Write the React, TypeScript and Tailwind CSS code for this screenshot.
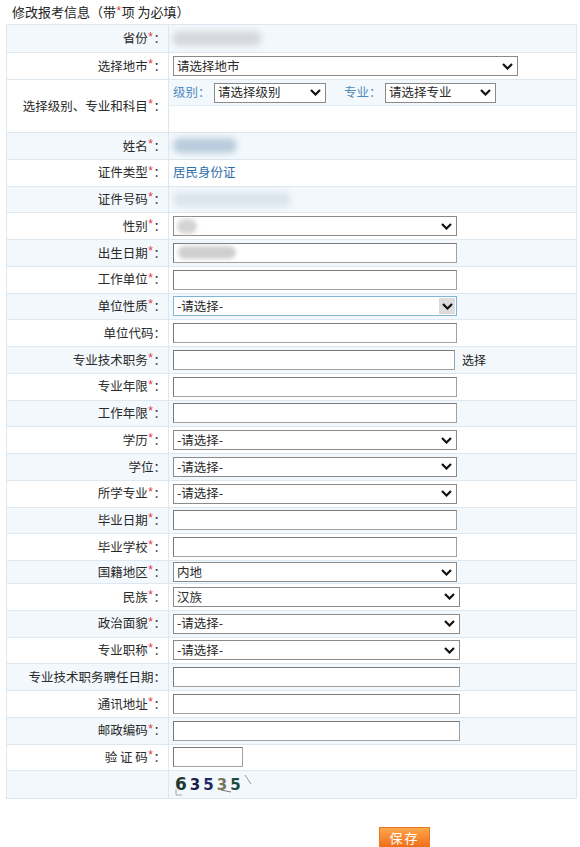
import { ReactNode } from "react";

type Field =
  | { kind: "blur"; w: number; tint?: string }
  | { kind: "text"; text: string }
  | { kind: "input"; w: number; blob?: boolean; after?: string }
  | { kind: "select"; w: number; text?: string; blob?: boolean; focus?: boolean };

interface Row {
  label: string;
  req: boolean;
  field: Field;
  h?: string;
}

const rows: Row[] = [
  { label: "姓名", req: true, field: { kind: "blur", w: 64, tint: "bg-[#b9cbdc]" } },
  { label: "证件类型", req: true, field: { kind: "text", text: "居民身份证" } },
  { label: "证件号码", req: true, field: { kind: "blur", w: 118, tint: "bg-[#dde5ec]" } },
  { label: "性别", req: true, field: { kind: "select", w: 284, blob: true } },
  { label: "出生日期", req: true, field: { kind: "input", w: 284, blob: true } },
  { label: "工作单位", req: true, field: { kind: "input", w: 284 } },
  { label: "单位性质", req: true, field: { kind: "select", w: 284, text: "-请选择-", focus: true } },
  { label: "单位代码", req: false, field: { kind: "input", w: 284 } },
  { label: "专业技术职务", req: true, field: { kind: "input", w: 282, after: "选择" } },
  { label: "专业年限", req: true, field: { kind: "input", w: 284 } },
  { label: "工作年限", req: true, field: { kind: "input", w: 284 } },
  { label: "学历", req: true, field: { kind: "select", w: 284, text: "-请选择-" } },
  { label: "学位", req: false, field: { kind: "select", w: 284, text: "-请选择-" } },
  { label: "所学专业", req: true, field: { kind: "select", w: 284, text: "-请选择-" } },
  { label: "毕业日期", req: true, field: { kind: "input", w: 284 } },
  { label: "毕业学校", req: true, field: { kind: "input", w: 284 } },
  { label: "国籍地区", req: true, field: { kind: "select", w: 284, text: "内地" }, h: "h-[23px]" },
  { label: "民族", req: true, field: { kind: "select", w: 287, text: "汉族" } },
  { label: "政治面貌", req: true, field: { kind: "select", w: 287, text: "-请选择-" } },
  { label: "专业职称", req: true, field: { kind: "select", w: 287, text: "-请选择-" } },
  { label: "专业技术职务聘任日期", req: false, field: { kind: "input", w: 287 } },
  { label: "通讯地址", req: true, field: { kind: "input", w: 287 } },
  { label: "邮政编码", req: true, field: { kind: "input", w: 287 } },
  { label: "验 证 码", req: true, field: { kind: "input", w: 70 } },
];

function Chevron() {
  return (
    <svg width="11" height="7" viewBox="0 0 11 7" className="shrink-0">
      <path d="M1 1l4.5 4.5L10 1" fill="none" stroke="#111" strokeWidth="2.2" />
    </svg>
  );
}

function Star() {
  return (
    <span className="text-[#e3343e] text-[12px] font-['Liberation_Sans',sans-serif] relative -top-[2px] mx-[0.5px]">
      *
    </span>
  );
}

function Label({ text, req }: { text: string; req: boolean }) {
  return (
    <div className="w-[162px] shrink-0 border-r border-[#dce7f0] flex items-center justify-end pr-[2px] whitespace-nowrap">
      {text}
      {req && <Star />}：
    </div>
  );
}

function Select({ w, text, blob, focus }: { w: number; text?: string; blob?: boolean; focus?: boolean }) {
  return (
    <div
      style={{ width: w }}
      className={`h-[20px] bg-white flex items-center pl-[3px] pr-[4px] border ${
        focus ? "border-[#7fb6d2]" : "border-[#8a8a8a]"
      }`}
    >
      {blob && <div className="w-[20px] h-[15px] rounded-full bg-[#d4d4d4] blur-[2px]" />}
      <span className="flex-1 leading-none">{text}</span>
      {focus ? (
        <div className="w-[16px] h-[16px] -mr-[3px] bg-[#dcdcdc] flex items-center justify-center">
          <Chevron />
        </div>
      ) : (
        <Chevron />
      )}
    </div>
  );
}

function Input({ w, blob }: { w: number; blob?: boolean }) {
  return (
    <div
      style={{ width: w }}
      className="h-[20px] bg-white border border-[#a0a0a0] border-t-[#7a7a7a] border-l-[#7a7a7a] flex items-center pl-[4px]"
    >
      {blob && <div className="w-[58px] h-[13px] rounded-full bg-[#cfcfcf] blur-[2px]" />}
    </div>
  );
}

function Value({ f }: { f: Field }): ReactNode {
  switch (f.kind) {
    case "blur":
      return <div style={{ width: f.w }} className={`h-[15px] rounded-full blur-[3px] ${f.tint}`} />;
    case "text":
      return <span className="text-[#2f6ea7]">{f.text}</span>;
    case "input":
      return (
        <div className="flex items-center gap-[7px]">
          <Input w={f.w} blob={f.blob} />
          {f.after && <span className="text-[12px] text-[#222]">{f.after}</span>}
        </div>
      );
    case "select":
      return <Select w={f.w} text={f.text} blob={f.blob} focus={f.focus} />;
  }
}

export default function App() {
  return (
    <div className="bg-white min-h-[847px] text-[12.5px] text-[#2a2a2a] font-['Noto_Sans_CJK_SC','Noto_Sans',sans-serif]">
      <div className="h-[24px] pl-[12px] pt-[2px] text-[13px] text-[#222]">
        修改报考信息（带<Star />项 为必填）
      </div>

      <div className="ml-[6px] w-[571px] border border-[#dce7f0]">
        {/* 省份 */}
        <div className="flex h-[28px] bg-[#f3f8fc] border-b border-[#dce7f0]">
          <Label text="省份" req />
          <div className="flex-1 flex items-center pl-[3px]">
            <div className="w-[90px] h-[15px] rounded-full bg-[#d5d9dd] blur-[3px]" />
          </div>
        </div>

        {/* 选择地市 */}
        <div className="flex h-[27px] bg-white border-b border-[#dce7f0]">
          <Label text="选择地市" req />
          <div className="flex-1 flex items-center pl-[4px]">
            <Select w={345} text="请选择地市" />
          </div>
        </div>

        {/* 级别 / 专业 */}
        <div className="flex h-[53px] bg-white border-b border-[#dce7f0]">
          <Label text="选择级别、专业和科目" req />
          <div className="flex-1 flex flex-col">
            <div className="h-[26px] bg-[#f3f8fc] border-b border-[#e6eef5] flex items-center pl-[4px]">
              <span className="text-[#4f89bd] w-[41px]">级别：</span>
              <Select w={112} text="请选择级别" />
              <span className="text-[#4f89bd] ml-[18px] w-[41px]">专业：</span>
              <Select w={111} text="请选择专业" />
            </div>
          </div>
        </div>

        {rows.map((r, i) => (
          <div
            key={r.label}
            className={`flex ${r.h ?? "h-[26.75px]"} border-b border-[#dce7f0] ${
              i % 2 === 0 ? "bg-[#f3f8fc]" : "bg-white"
            }`}
          >
            <Label text={r.label} req={r.req} />
            <div className="flex-1 flex items-center pl-[4px]">
              <Value f={r.field} />
            </div>
          </div>
        ))}

        {/* captcha */}
        <div className="flex h-[26.75px] bg-[#f3f8fc]">
          <div className="w-[162px] shrink-0 border-r border-[#dce7f0]" />
          <div className="flex-1 flex items-center pl-[6px]">
            <div className="relative flex items-end gap-[3px] font-['DejaVu_Sans',sans-serif] font-bold leading-none">
              <span className="text-[17px] text-[#20382c]">6</span>
              <span className="text-[15px] text-[#1c1c48]">3</span>
              <span className="text-[15px] text-[#1f2a66]">5</span>
              <span className="text-[15px] text-[#77745a]">3</span>
              <span className="text-[15px] text-[#1d4a3d]">5</span>
              <svg width="80" height="24" className="absolute -left-[2px] -top-[4px]">
                <path d="M72 3l6 9" stroke="#999" strokeWidth="1" fill="none" />
                <path d="M3 17v6M3 23h6" stroke="#9aa" strokeWidth="1" fill="none" />
                <path d="M48 18l10 2" stroke="#777" strokeWidth="1" fill="none" />
              </svg>
            </div>
          </div>
        </div>
      </div>

      <div className="mt-[28px] ml-[379px] w-[51px] h-[21px] border border-[#e37a24] bg-gradient-to-b from-[#fda64a] to-[#ef6d16] text-white text-[13px] flex items-center justify-center tracking-[2px]">
        保存
      </div>
    </div>
  );
}
